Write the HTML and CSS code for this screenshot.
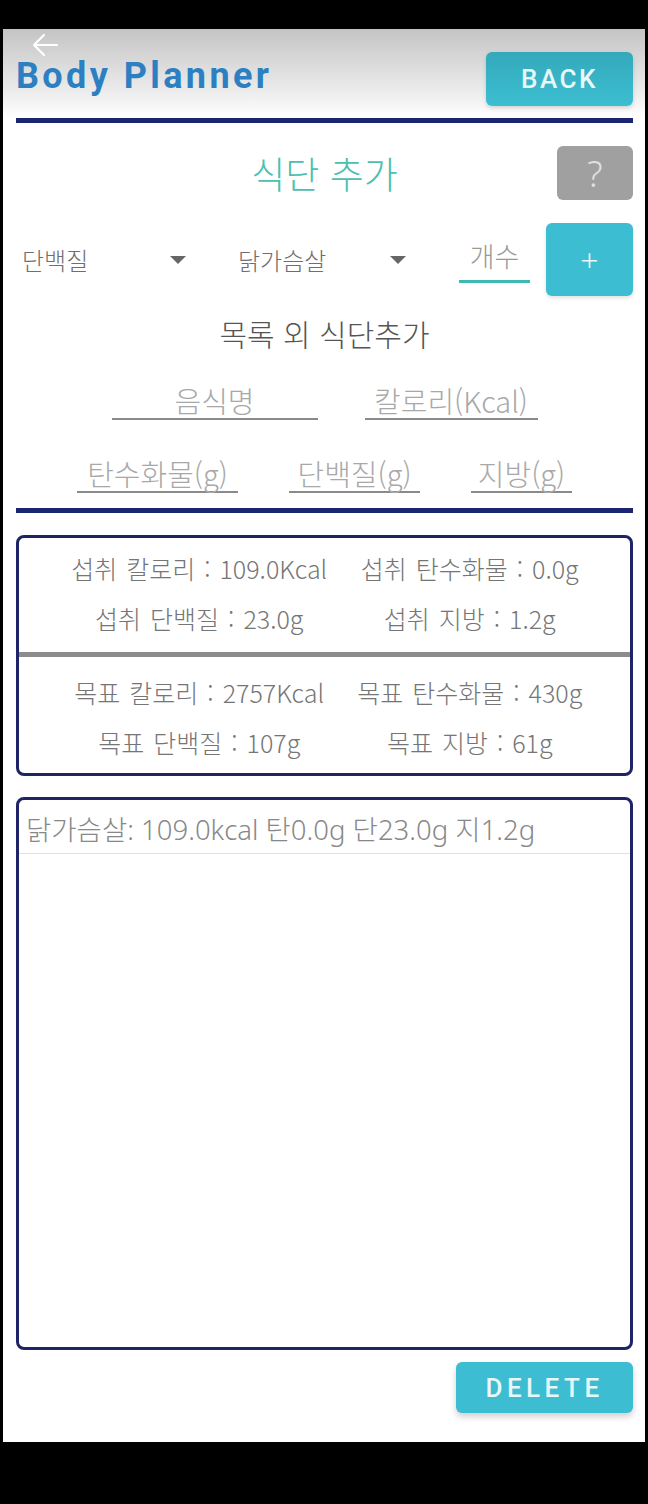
FILE: index.html
```html
<!DOCTYPE html>
<html lang="ko">
<head>
  <meta charset="UTF-8">
  <title>Body Planner - 식단 추가</title>
  <link rel="stylesheet" href="styles.css">
</head>
<body>
  <div class="statusbar"></div>
  <div class="app">
    <header class="topbar">
      <svg class="back-arrow" width="28" height="24" viewBox="0 0 28 24">
        <path d="M13 2 L3 12 L13 22 M3 12 H26" fill="none" stroke="#fff" stroke-width="2.2" stroke-linecap="round" stroke-linejoin="round"/>
      </svg>
      <h1 class="brand">Body Planner</h1>
      <button class="btn btn-back">BACK</button>
    </header>
    <div class="rule"></div>

    <main class="content">
      <div class="title-row">
        <span></span>
        <h2 class="page-title">식단 추가</h2>
        <button class="btn-help">?</button>
      </div>

      <div class="pick-row">
        <div class="spinner spinner-cat"><span>단백질</span><i class="caret"></i></div>
        <div class="spinner spinner-food"><span>닭가슴살</span><i class="caret"></i></div>
        <div class="count-field">개수</div>
        <button class="btn btn-add">+</button>
      </div>

      <h3 class="sub-title">목록 외 식단추가</h3>

      <div class="field-row">
        <div class="field field-name">음식명</div>
        <div class="field field-kcal">칼로리(Kcal)</div>
      </div>
      <div class="field-row field-row-2">
        <div class="field field-carb">탄수화물(g)</div>
        <div class="field field-prot">단백질(g)</div>
        <div class="field field-fat">지방(g)</div>
      </div>
    </main>
    <div class="rule rule-low"></div>

    <section class="summary">
      <div class="summary-part part-eaten">
        <div class="stat">섭취 칼로리 : 109.0Kcal</div>
        <div class="stat">섭취 탄수화물 : 0.0g</div>
        <div class="stat">섭취 단백질 : 23.0g</div>
        <div class="stat">섭취 지방 : 1.2g</div>
      </div>
      <div class="summary-divider"></div>
      <div class="summary-part part-goal">
        <div class="stat">목표 칼로리 : 2757Kcal</div>
        <div class="stat">목표 탄수화물 : 430g</div>
        <div class="stat">목표 단백질 : 107g</div>
        <div class="stat">목표 지방 : 61g</div>
      </div>
    </section>

    <ul class="food-list">
      <li class="food-item">닭가슴살: 109.0kcal 탄0.0g 단23.0g 지1.2g</li>
    </ul>

    <div class="actions">
      <button class="btn btn-delete">DELETE</button>
    </div>
  </div>
</body>
</html>
```

FILE: styles.css
```css
* {
  box-sizing: border-box;
}
body {
  margin: 0;
  padding: 0;
  background: #000;
  font-family: "Noto Sans", "Noto Sans CJK KR", sans-serif;
}
.statusbar {
  height: 29px;
}
.app {
  position: relative;
  margin-left: 3px;
  width: 642px;
  height: 1413px;
  background: #fff;
}
.topbar {
  display: flex;
  justify-content: space-between;
  align-items: flex-start;
  height: 89px;
  padding: 0 12px 0 13px;
  background: linear-gradient(#c4c4c4, #ececec 70%, #fff);
}
.back-arrow {
  position: absolute;
  left: 28px;
  top: 4px;
}
.brand {
  margin: 27px 0 0 0;
  font-family: Roboto, sans-serif;
  font-weight: 700;
  font-size: 36px;
  line-height: 40px;
  letter-spacing: 3.4px;
  color: #2c80c2;
}
.btn {
  border: none;
  border-radius: 6px;
  background: #3dbdd2;
  color: #e9f7f9;
  font-family: Roboto, sans-serif;
  font-weight: 500;
  cursor: pointer;
  padding: 0;
}
.btn-back {
  margin-top: 23px;
  width: 147px;
  height: 54px;
  font-size: 26px;
  letter-spacing: 2.5px;
  background: linear-gradient(#33a9ba, #3dbed2);
  box-shadow: 0 2px 4px rgba(0,0,0,0.15);
}
.rule {
  height: 5px;
  margin: 0 12px 0 13px;
  background: #1b2670;
}
.content {
  padding: 0 12px 0 13px;
}
.title-row {
  display: grid;
  grid-template-columns: 1fr auto 1fr;
  align-items: center;
  margin-top: 23px;
  height: 54px;
}
.page-title {
  margin: 0;
  font-family: "Noto Sans CJK KR", sans-serif;
  font-weight: 300;
  font-size: 37px;
  color: #4dbfb0;
}
.btn-help {
  justify-self: end;
  width: 76px;
  height: 54px;
  border: none;
  border-radius: 6px;
  background: #a0a0a0;
  color: #e0e0e0;
  font-family: "Noto Sans", sans-serif;
  font-weight: 300;
  font-size: 36px;
  padding: 0;
}
.pick-row {
  display: flex;
  align-items: center;
  margin-top: 23px;
  height: 73px;
}
.spinner {
  display: flex;
  justify-content: space-between;
  align-items: center;
  width: 200px;
  padding-left: 6px;
  font-family: "Noto Sans CJK KR", sans-serif;
  font-weight: 300;
  font-size: 24px;
  color: #6e6e6e;
}
.spinner-cat {
  padding-right: 30px;
}
.spinner-food {
  margin-left: 16px;
  padding-right: 26px;
}
.caret {
  width: 0;
  height: 0;
  border-left: 8px solid transparent;
  border-right: 8px solid transparent;
  border-top: 8px solid #666;
}
.count-field {
  margin-left: 27px;
  width: 71px;
  height: 47px;
  line-height: 40px;
  text-align: center;
  border-bottom: 3px solid #3dbab2;
  font-family: "Noto Sans CJK KR", sans-serif;
  font-weight: 300;
  font-size: 27px;
  color: #9a9a9a;
}
.btn-add {
  margin-left: 16px;
  width: 87px;
  height: 73px;
  font-family: "Noto Sans", sans-serif;
  font-weight: 300;
  font-size: 32px;
  box-shadow: 0 2px 4px rgba(0,0,0,0.12);
}
.sub-title {
  margin: 15px 0 0 0;
  text-align: center;
  font-family: "Noto Sans CJK KR", sans-serif;
  font-weight: 300;
  font-size: 30px;
  line-height: 44px;
  color: #555;
}
.field-row {
  display: flex;
  justify-content: center;
  gap: 47px;
  margin-top: 27px;
}
.field-row-2 {
  gap: 51px;
  margin-top: 35px;
}
.field {
  height: 38px;
  line-height: 36px;
  text-align: center;
  border-bottom: 2px solid #8a8a8a;
  font-family: "Noto Sans CJK KR", sans-serif;
  font-weight: 300;
  font-size: 29px;
  color: #a8a8a8;
}
.field-name { width: 206px; }
.field-kcal { width: 173px; }
.field-carb { width: 161px; }
.field-prot { width: 131px; }
.field-fat { width: 101px; }
.rule-low {
  margin-top: 15px;
}
.summary {
  margin: 22px 12px 0 13px;
  height: 241px;
  border: 3px solid #1e2466;
  border-radius: 8px;
  font-family: "Noto Sans CJK KR", sans-serif;
  font-weight: 300;
  font-size: 25px;
  word-spacing: 2px;
  color: #757575;
}
.summary-part {
  display: grid;
  grid-template-columns: 1fr 1fr;
  grid-auto-rows: 50px;
  align-items: center;
  padding: 5px 25px 9px 45px;
  white-space: nowrap;
}
.part-goal {
  padding: 10px 25px 6px 45px;
}
.stat {
  justify-self: center;
}
.summary-divider {
  height: 5px;
  background: #8c8c8c;
}
.food-list {
  list-style: none;
  margin: 21px 12px 0 13px;
  padding: 0;
  height: 553px;
  border: 3px solid #1e2466;
  border-radius: 8px;
}
.food-item {
  padding: 14px 0 8px 7px;
  line-height: 31px;
  border-bottom: 1px solid #e0e0e0;
  font-family: "Noto Sans", "Noto Sans CJK KR", sans-serif;
  font-weight: 300;
  font-size: 27.5px;
  color: #888;
}
.actions {
  display: flex;
  justify-content: flex-end;
  padding-right: 12px;
  margin-top: 12px;
}
.btn-delete {
  width: 177px;
  height: 51px;
  font-size: 26px;
  letter-spacing: 4.5px;
  box-shadow: 0 4px 6px rgba(0,0,0,0.18);
}
```
